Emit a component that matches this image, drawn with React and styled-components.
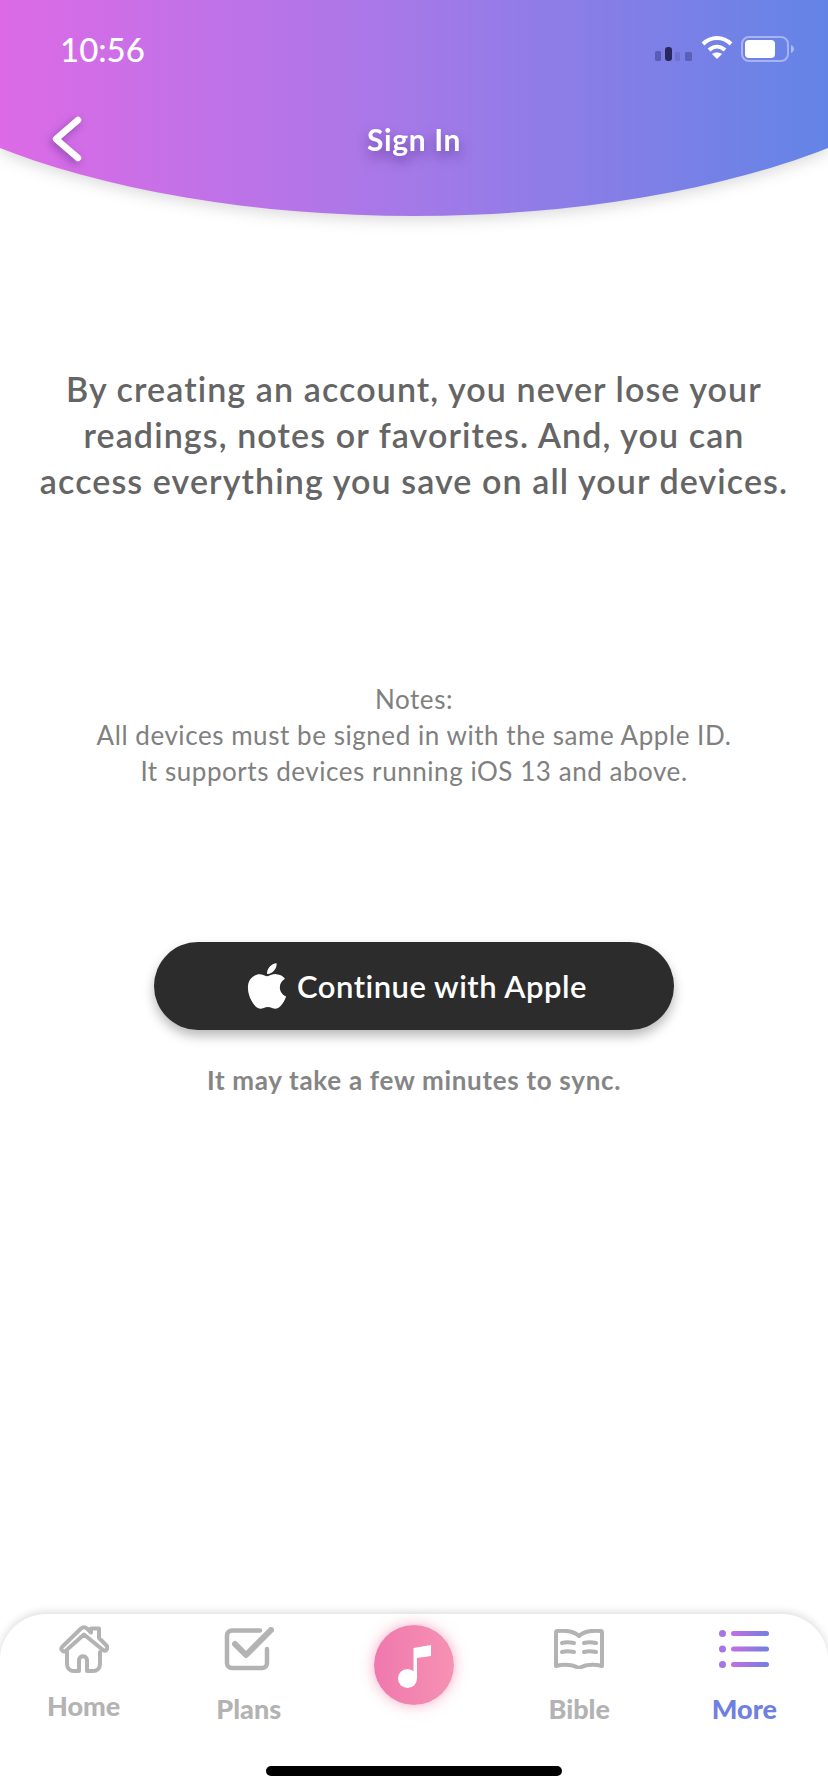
import React from 'react'
import styled, { createGlobalStyle } from 'styled-components'
import { FaApple } from 'react-icons/fa'

const Global = createGlobalStyle`
	html, body { margin: 0; padding: 0; background: #fff; }
	* { box-sizing: border-box; }
`

const Page = styled.div`
	width: 828px;
	height: 1792px;
	display: flex;
	flex-direction: column;
	font-family: Lato, "Open Sans", sans-serif;
	overflow: hidden;
`
const HeaderShadow = styled.div`
	height: 216px;
	filter: drop-shadow(0 3px 8px rgba(0,0,0,.16));
`
const Header = styled.header`
	height: 216px;
	padding: 0 33px 0 51px;
	background: linear-gradient(90deg, #dd6ae6 0%, #a878e8 47%, #6384e6 100%);
	clip-path: ellipse(600px 246px at 50% -30px);
	color: #fff;
`
const StatusBar = styled.div`
	height: 100px;
	display: flex;
	align-items: center;
	justify-content: space-between;
	padding: 0 0 0 9px;
`
const Time = styled.span`
	font-size: 33px;
	font-weight: 500;
	margin-top: -2px;
`
const NavBar = styled.div`
	display: grid;
	grid-template-columns: 40px 1fr 40px;
	align-items: center;
	margin-right: 18px;
	margin-top: 16px;
`
const Title = styled.h1`
	margin: 0;
	text-align: center;
	font-size: 30px;
	font-weight: 700;
	line-height: 44px;
	letter-spacing: .6px;
	text-shadow: 0 6px 12px rgba(60,30,110,.5);
`
const Main = styled.main`
	flex: 1;
	display: flex;
	flex-direction: column;
	align-items: center;
	text-align: center;
`
const Lead = styled.p`
	margin: 150px 0 0;
	font-size: 34px;
	font-weight: 600;
	line-height: 46px;
	letter-spacing: 1.1px;
	color: #656565;
`
const Notes = styled.p`
	margin: 177px 0 0;
	font-size: 26px;
	line-height: 36px;
	letter-spacing: .55px;
	color: #808080;
`
const AppleButton = styled.button`
	margin-top: 153px;
	width: 520px;
	height: 88px;
	border: 0;
	border-radius: 44px;
	background: #2c2c2c;
	color: #fff;
	display: flex;
	align-items: center;
	justify-content: center;
	gap: 4px;
	font: 600 31px Lato, sans-serif;
	letter-spacing: .5px;
	box-shadow: 0 6px 12px rgba(0,0,0,.28);
`
const Sync = styled.p`
	margin: 34px 0 0;
	font-size: 26px;
	font-weight: 700;
	letter-spacing: .7px;
	color: #858585;
`
const TabBar = styled.nav`
	height: 178px;
	padding: 0 1px;
	border-radius: 46px 46px 0 0;
	background: #fff;
	box-shadow: 0 -2px 8px rgba(0,0,0,.14);
`
const Tabs = styled.div`
	display: grid;
	grid-template-columns: repeat(5, 1fr);
	height: 152px;
`
const Tab = styled.div`
	display: flex;
	flex-direction: column;
	align-items: center;
	padding-top: 4px;
`
const IconSlot = styled.div`
	height: 62px;
	display: flex;
	align-items: center;
	justify-content: center;
`
const TabLabel = styled.span`
	margin-top: ${p => p.$up ? 9 : 12}px;
	font-size: 27px;
	font-weight: 900;
	color: ${p => p.$active ? '#6f80e0' : '#b3b3b3'};
`
const MusicButton = styled.div`
	width: 80px;
	height: 80px;
	margin-top: 7px;
	border-radius: 50%;
	background: linear-gradient(90deg, #ef78ae, #f692b2);
	box-shadow: 0 0 14px rgba(240,90,140,.5);
	display: flex;
	align-items: center;
	justify-content: center;
`
const HomeBar = styled.div`
	width: 296px;
	height: 10px;
	margin: 0 auto;
	border-radius: 5px;
	background: #000;
`
const StatusIcons = styled.div`
	display: flex;
	align-items: center;
	gap: 8px;
`

const Signal = () => (
	<svg width="38" height="16" viewBox="0 0 38 16" style={{ marginTop: 8 }}>
		<rect x="0" y="5" width="6" height="10" rx="1.5" fill="#3c3f8e" opacity=".55" />
		<rect x="10" y="1" width="7" height="14" rx="3" fill="#26285e" />
		<rect x="20" y="6" width="5" height="9" rx="1.5" fill="#3c3f8e" opacity=".22" />
		<rect x="30" y="6" width="7" height="9" rx="1.5" fill="#3c3f8e" opacity=".5" />
	</svg>
)

const Wifi = () => (
	<svg width="32" height="25" viewBox="0 0 32 25" fill="none" stroke="#fff" strokeWidth="4" style={{ marginTop: -5 }}>
		<path d="M2 9C10 1 22 1 30 9" />
		<path d="M8 15c5-4.5 11-4.500 16 0" />
		<path d="M16 24l-5-5c3-2 7-2 10 0z" fill="#fff" stroke="none" />
	</svg>
)

const Battery = () => (
	<svg width="54" height="26" viewBox="0 0 54 26" style={{ marginTop: -3 }}>
		<rect x="1" y="1" width="46" height="24" rx="7" fill="none" stroke="#fff" strokeOpacity=".4" strokeWidth="2" />
		<rect x="4" y="4" width="30" height="18" rx="4" fill="#fff" />
		<path d="M50 9c2 1 3 2.500 3 4s-1 3-3 4z" fill="#fff" fillOpacity=".45" />
	</svg>
)

const Chevron = () => (
	<svg width="32" height="46" viewBox="0 0 32 46" fill="none" stroke="#fff" strokeWidth="6.500" strokeLinecap="round" strokeLinejoin="round" style={{ filter: 'drop-shadow(-2px 3px 4px rgba(60,30,110,.45))' }}>
		<path d="M27 4L5 23l22 19" />
	</svg>
)

const HomeIcon = () => (
	<svg width="50" height="48" viewBox="0 0 50 48" fill="none" stroke="#b3b3b3" strokeWidth="4" strokeLinejoin="round" strokeLinecap="round">
		<path d="M3.500 21.500L22 3.500q3-2.500 6 0L32 7.500V3.500h8V13l7 7c3 3 0 7-3 5L25 9.500 6.500 26c-3 2-5.500-2.500-3-4.500z" />
		<path d="M8 27v12c0 4 3 7 7 7h5V35c0-5 8-5 8 0v11h6c4 0 7-3 7-7V27" />
	</svg>
)

const PlansIcon = () => (
	<svg width="50" height="44" viewBox="0 0 50 44" fill="none" stroke="#b3b3b3" strokeLinecap="round" strokeLinejoin="round">
		<path d="M36 3.500H8a5 5 0 0 0-5 5V36a5 5 0 0 0 5 5h30a5 5 0 0 0 5-5V22" strokeWidth="4.500" />
		<path d="M11 17l11 11L47 3" strokeWidth="6" />
	</svg>
)

const BibleIcon = () => (
	<svg width="50" height="40" viewBox="0 0 50 40" fill="none" stroke="#b3b3b3" strokeWidth="4" strokeLinecap="round" strokeLinejoin="round">
		<path d="M25 7C20 2 10 1 3 2c-1 0-1 1-1 2v33c8-2 17-1 23 2 6-3 15-4 23-2V4c0-1 0-2-1-2-7-1-17 0-22 5z" />
		<path d="M8 14c3-1 8-1 12 0M8 23c3-1 8-1 12 0M30 14c3-1 8-1 12 0M30 23c3-1 8-1 12 0" />
	</svg>
)

const MoreIcon = () => (
	<svg width="50" height="38" viewBox="0 0 50 38">
		<defs>
			<linearGradient id="moreLine" x1="0" x2="1" y1="0" y2="0">
				<stop offset="0" stopColor="#c56ee2" />
				<stop offset="1" stopColor="#6f80e0" />
			</linearGradient>
		</defs>
		{[3.500, 19, 34.500].map(y => (
			<g key={y}>
				<circle cx="3.500" cy={y} r="3.500" fill="#a873e2" />
				<rect x="12" y={y - 2.500} width="38" height="5" rx="2.500" fill="url(#moreLine)" />
			</g>
		))}
	</svg>
)

const NoteIcon = () => (
	<svg width="33" height="43" viewBox="0 0 33 43" fill="#fff" style={{ marginLeft: 2, marginTop: 2 }}>
		<circle cx="9.500" cy="33.500" r="9.500" />
		<path d="M15.500 3L33 0v11l-14 2v20h-3.500z" />
	</svg>
)

const TABS = [
	{ label: 'Home', icon: <HomeIcon />, up: true },
	{ label: 'Plans', icon: <PlansIcon /> },
	null,
	{ label: 'Bible', icon: <BibleIcon /> },
	{ label: 'More', icon: <MoreIcon />, active: true },
]

export default function App() {
	return (
		<Page>
			<Global />
			<HeaderShadow>
				<Header>
					<StatusBar>
						<Time>10:56</Time>
						<StatusIcons>
							<Signal />
							<Wifi />
							<Battery />
						</StatusIcons>
					</StatusBar>
					<NavBar>
						<Chevron />
						<Title>Sign In</Title>
					</NavBar>
				</Header>
			</HeaderShadow>
			<Main>
				<Lead>
					By creating an account, you never lose your<br />
					readings, notes or favorites. And, you can<br />
					access everything you save on all your devices.
				</Lead>
				<Notes>
					Notes:<br />
					All devices must be signed in with the same Apple ID.<br />
					It supports devices running iOS 13 and above.
				</Notes>
				<AppleButton>
					<FaApple size={52} />
					Continue with Apple
				</AppleButton>
				<Sync>It may take a few minutes to sync.</Sync>
			</Main>
			<TabBar>
				<Tabs>
					{TABS.map((t, i) => t ? (
						<Tab key={t.label}>
							<IconSlot>{t.icon}</IconSlot>
							<TabLabel $up={t.up} $active={t.active}>{t.label}</TabLabel>
						</Tab>
					) : (
						<Tab key={i}>
							<MusicButton><NoteIcon /></MusicButton>
						</Tab>
					))}
				</Tabs>
				<HomeBar />
			</TabBar>
		</Page>
	)
}
